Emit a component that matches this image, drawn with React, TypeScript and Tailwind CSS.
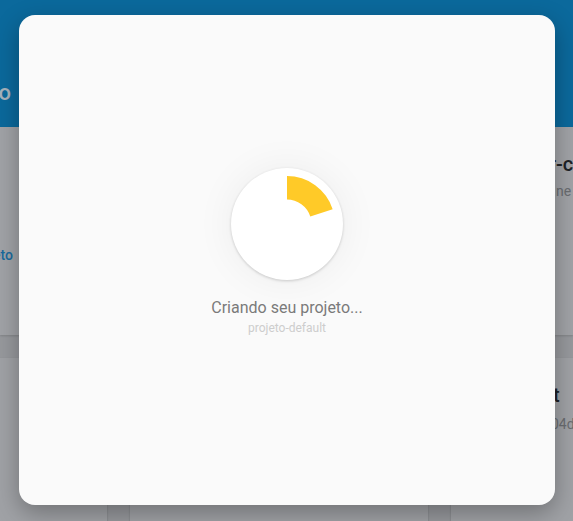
import React from 'react'

function Spinner() {
  return (
    <div className="w-[112px] h-[112px] rounded-full bg-white shadow-[0_1px_3px_rgba(0,0,0,0.18),0_0_40px_rgba(0,0,0,0.06)]">
      <svg width="112" height="112" viewBox="0 0 112 112">
        <path
          d="M56 8 A48 48 0 0 1 101.65 41.17 L79.3 48.43 A24.5 24.5 0 0 0 56 31.5 Z"
          fill="#ffca28"
        />
      </svg>
    </div>
  )
}

export default function App() {
  return (
    <div className="relative w-[573px] h-[521px] overflow-hidden bg-[#97999d] font-['Roboto',sans-serif]">
      {/* page behind the dialog, already dimmed */}
      <header className="h-[127px] bg-[#0b699c] flex items-start pt-[76px]">
        <div className="w-[11px] overflow-hidden flex justify-end">
          <span className="whitespace-nowrap text-[22px] font-medium text-[#a8b3bc]">Novo projeto</span>
        </div>
      </header>

      <section className="h-[208px] bg-[#a1a3a7] shadow-[0_1px_2px_rgba(0,0,0,0.15)] flex justify-between">
        <div className="w-[13px] overflow-hidden flex justify-end pt-[118px]">
          <span className="whitespace-nowrap text-[14px] font-medium text-[#1a6b9e]">Criar projeto</span>
        </div>
        <div className="w-[24px] overflow-hidden flex flex-col pt-[22px]">
          <span className="whitespace-nowrap text-[20px] font-medium text-[#1e2226]">r-core</span>
          <span className="whitespace-nowrap text-[14px] text-[#6a6d71] mt-[2px] ml-[7px]">ne</span>
        </div>
      </section>

      <div className="mt-[23px] flex gap-[23px] -ml-[191px]">
        <div className="w-[298px] h-[200px] shrink-0 bg-[#a0a2a6] shadow-[0_1px_2px_rgba(0,0,0,0.2)]" />
        <div className="w-[298px] h-[200px] shrink-0 bg-[#a0a2a6] shadow-[0_1px_2px_rgba(0,0,0,0.2)]" />
        <div className="w-[298px] h-[200px] shrink-0 bg-[#a0a2a6] shadow-[0_1px_2px_rgba(0,0,0,0.2)] pt-[22px] pl-[102px] flex flex-col">
          <span className="whitespace-nowrap text-[20px] font-medium text-[#1e2226]">t</span>
          <span className="whitespace-nowrap text-[14px] text-[#6a6d71] mt-[4px] -ml-[2px]">04d2</span>
        </div>
      </div>

      {/* dialog */}
      <div className="absolute left-[19px] top-[15px] w-[536px] h-[490px] rounded-[16px] bg-[#fafafa] shadow-[0_8px_24px_rgba(0,0,0,0.3)] flex flex-col items-center pt-[153px]">
        <Spinner />
        <p className="mt-[18px] text-[16px] leading-[20px] text-[#7a7a7a]">Criando seu projeto...</p>
        <p className="mt-[3px] text-[12px] leading-[14px] text-[#cdcdcd]">projeto-default</p>
      </div>
    </div>
  )
}
